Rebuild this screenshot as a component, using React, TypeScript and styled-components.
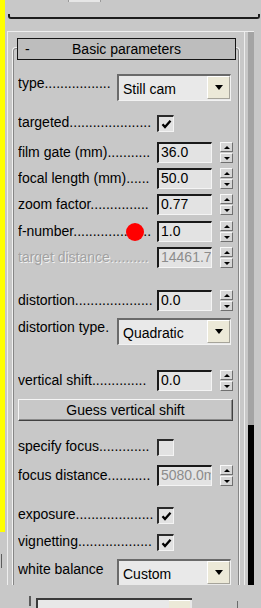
import React from "react";
import styled, { createGlobalStyle } from "styled-components";

const dots = (n: number) => ".".repeat(n);

function Check() {
  return (
    <svg width="13" height="13" viewBox="0 0 13 13">
      <path d="M2.5 6.2 L5 9 L10.5 2.8" fill="none" stroke="#000" strokeWidth="2.3" />
    </svg>
  );
}

function Spinner() {
  return (
    <SpinBox>
      <SpinHalf>
        <ArrowUp />
      </SpinHalf>
      <SpinHalf>
        <ArrowDown />
      </SpinHalf>
    </SpinBox>
  );
}

function SpinRow({
  label,
  value,
  mt,
  labelDisabled,
  valueDisabled,
  children,
}: {
  label: string;
  value: string;
  mt: number;
  labelDisabled?: boolean;
  valueDisabled?: boolean;
  children?: React.ReactNode;
}) {
  return (
    <Row $mt={mt} $h={21}>
      <Label $w={139} $mt={2} $disabled={labelDisabled}>
        {label}
      </Label>
      <Field $disabled={valueDisabled}>{value}</Field>
      <Spinner />
      {children}
    </Row>
  );
}

function CheckRow({ label, mt, checked }: { label: string; mt: number; checked: boolean }) {
  return (
    <Row $mt={mt} $h={17}>
      <Label $w={139} $mt={-1}>
        {label}
      </Label>
      <CheckBox>{checked && <Check />}</CheckBox>
    </Row>
  );
}

function DropRow({
  label,
  value,
  mt,
  labelTop,
}: {
  label: string;
  value: string;
  mt: number;
  labelTop: number;
}) {
  return (
    <Row $mt={mt} $h={27}>
      <Label $w={99} $mt={labelTop}>
        {label}
      </Label>
      <Dropdown>
        <DropText>{value}</DropText>
        <DropButton>
          <ArrowDropDown />
        </DropButton>
      </Dropdown>
    </Row>
  );
}

export default function App() {
  return (
    <>
      <GlobalStyle />
      <Screen>
        <Upper>
          <Edge>
            <Yellow />
            <EdgeTick />
          </Edge>
          <UpperMain>
            <TopBar>
              <Stub />
              <Separator />
            </TopBar>
            <Frame>
              <Panel>
                <Header>
                  <Minus>-</Minus>
                  <HeaderTitle>Basic parameters</HeaderTitle>
                  <span />
                </Header>
                <Group>
                  <DropRow label={"type" + dots(17)} value="Still cam" mt={25} labelTop={1} />
                  <CheckRow label={"targeted" + dots(21)} mt={14} checked />
                  <SpinRow label={"film gate (mm)" + dots(11)} value="36.0" mt={10} />
                  <SpinRow label={"focal length (mm)" + dots(6)} value="50.0" mt={5} />
                  <SpinRow label={"zoom factor" + dots(15)} value="0.77" mt={5} />
                  <SpinRow label={"f-number" + dots(20)} value="1.0" mt={6}>
                    <RedDot />
                  </SpinRow>
                  <SpinRow
                    label={"target distance" + dots(10)}
                    value="14461.74"
                    mt={5}
                    labelDisabled
                    valueDisabled
                  />
                  <SpinRow label={"distortion" + dots(20)} value="0.0" mt={22} />
                  <DropRow label="distortion type." value="Quadratic" mt={7} labelTop={1} />
                  <SpinRow label={"vertical shift" + dots(14)} value="0.0" mt={25} />
                  <Row $mt={8} $h={22}>
                    <GuessButton type="button">Guess vertical shift</GuessButton>
                  </Row>
                  <CheckRow label={"specify focus" + dots(13)} mt={18} checked={false} />
                  <SpinRow
                    label={"focus distance" + dots(11)}
                    value="5080.0mm"
                    mt={9}
                    valueDisabled
                  />
                  <CheckRow label={"exposure" + dots(20)} mt={21} checked />
                  <CheckRow label={"vignetting" + dots(19)} mt={10} checked />
                  <DropRow label="white balance" value="Custom" mt={8} labelTop={2} />
                </Group>
              </Panel>
              <Track>
                <Thumb />
              </Track>
            </Frame>
          </UpperMain>
        </Upper>
        <Bottom>
          <BottomLine />
          <BottomRow>
            <BottomVLine />
            <BottomCombo>
              <BottomComboButton />
            </BottomCombo>
            <BottomTick />
          </BottomRow>
        </Bottom>
      </Screen>
    </>
  );
}

/* styles */

const GlobalStyle = createGlobalStyle`
  html, body {
    margin: 0;
    padding: 0;
    background: #c8c8c8;
  }
  body {
    font-family: "Liberation Sans", Arial, sans-serif;
  }
`;

const Screen = styled.div`
  width: 261px;
  height: 608px;
  display: flex;
  flex-direction: column;
  overflow: hidden;
  background: #c8c8c8;
  color: #000;
  font-family: "Liberation Sans", Arial, sans-serif;
  font-size: 14px;
  line-height: 16px;
`;

const Upper = styled.div`
  display: flex;
  height: 590px;
  flex-shrink: 0;
`;

const Edge = styled.div`
  width: 5px;
  display: flex;
  flex-direction: column;
  flex-shrink: 0;
`;

const Yellow = styled.div`
  height: 532px;
  background: #ffff00;
`;

const EdgeTick = styled.div`
  margin: 22px 0 0 1px;
  width: 1px;
  height: 14px;
  background: #5c5c5c;
`;

const UpperMain = styled.div`
  flex: 1;
  min-width: 0;
  display: flex;
  flex-direction: column;
`;

const TopBar = styled.div`
  height: 31px;
  display: flex;
  flex-direction: column;
  flex-shrink: 0;
`;

const Stub = styled.div`
  margin-left: 63px;
  width: 33px;
  height: 2px;
  box-sizing: border-box;
  background: #e6e6e6;
  border-left: 1px solid #9a9a9a;
  border-right: 1px solid #9a9a9a;
`;

const Separator = styled.div`
  margin: 12px 0 0 3px;
  width: 252px;
  height: 5px;
  box-sizing: border-box;
  border: 2px solid #1c1c1c;
  border-top: none;
  border-radius: 0 0 3px 3px;
`;

const Frame = styled.div`
  display: flex;
  margin-left: 2px;
  width: 247px;
  height: 554px;
  box-sizing: border-box;
  border-top: 1px solid #eeeeee;
  overflow: hidden;
`;

const Panel = styled.div`
  width: 238px;
  flex-shrink: 0;
  box-sizing: border-box;
  border-left: 1px solid #eeeeee;
  border-right: 1px solid #eeeeee;
  display: flex;
  flex-direction: column;
`;

const Header = styled.div`
  position: relative;
  z-index: 1;
  margin: 6px 0 0 9px;
  width: 219px;
  height: 22px;
  flex-shrink: 0;
  box-sizing: border-box;
  border: 1px solid #141414;
  background: #bdbdbd;
  display: grid;
  grid-template-columns: 20px 1fr 20px;
  align-items: center;
`;

const Minus = styled.span`
  padding-left: 7px;
`;

const HeaderTitle = styled.span`
  text-align: center;
`;

const Group = styled.div`
  margin: -12px 0 0 5px;
  width: 226px;
  flex-shrink: 0;
  box-sizing: border-box;
  border: 1px solid #868686;
  border-radius: 3px 3px 0 0;
  box-shadow: 0 0 0 1px #f2f2f2;
  padding: 0 0 40px 4px;
  display: flex;
  flex-direction: column;
`;

const Row = styled.div<{ $mt: number; $h: number }>`
  position: relative;
  display: flex;
  align-items: flex-start;
  margin-top: ${(p) => p.$mt}px;
  height: ${(p) => p.$h}px;
  flex-shrink: 0;
`;

const Label = styled.span<{ $w: number; $mt: number; $disabled?: boolean }>`
  width: ${(p) => p.$w}px;
  margin-top: ${(p) => p.$mt}px;
  flex-shrink: 0;
  white-space: nowrap;
  overflow: hidden;
  color: ${(p) => (p.$disabled ? "#a2a2a2" : "#000")};
  text-shadow: ${(p) => (p.$disabled ? "1px 1px 0 #f2f2f2" : "none")};
`;

const Field = styled.div<{ $disabled?: boolean }>`
  width: 55px;
  height: 21px;
  flex-shrink: 0;
  box-sizing: border-box;
  border-style: solid;
  border-width: 2px 1px 1px 2px;
  border-color: #1a1a1a #f4f4f4 #f4f4f4 #1a1a1a;
  background: #e3e3e3;
  padding-left: 2px;
  white-space: nowrap;
  overflow: hidden;
  color: ${(p) => (p.$disabled ? "#8c8c8c" : "#000")};
`;

const SpinBox = styled.div`
  margin-left: 8px;
  width: 13px;
  height: 21px;
  display: flex;
  flex-direction: column;
  gap: 1px;
  flex-shrink: 0;
`;

const SpinHalf = styled.div`
  flex: 1;
  display: flex;
  align-items: center;
  justify-content: center;
  box-sizing: border-box;
  background: #d6d6d6;
  border: 1px solid;
  border-color: #f8f8f8 #707070 #707070 #f8f8f8;
`;

const ArrowUp = styled.span`
  width: 0;
  height: 0;
  border-left: 3px solid transparent;
  border-right: 3px solid transparent;
  border-bottom: 3px solid #000;
`;

const ArrowDown = styled.span`
  width: 0;
  height: 0;
  border-left: 3px solid transparent;
  border-right: 3px solid transparent;
  border-top: 3px solid #000;
`;

const CheckBox = styled.div`
  width: 17px;
  height: 17px;
  flex-shrink: 0;
  box-sizing: border-box;
  border-style: solid;
  border-width: 2px 1px 1px 2px;
  border-color: #2a2a2a #f4f4f4 #f4f4f4 #2a2a2a;
  background: #e2e2e2;
  display: flex;
  align-items: center;
  justify-content: center;
`;

const Dropdown = styled.div`
  width: 114px;
  height: 27px;
  flex-shrink: 0;
  box-sizing: border-box;
  border-style: solid;
  border-width: 2px 1px 1px 2px;
  border-color: #6a6a6a #f2f2f2 #f2f2f2 #6a6a6a;
  background: #e9e9e9;
  display: flex;
`;

const DropText = styled.span`
  padding: 5px 0 0 4px;
  flex: 1;
  white-space: nowrap;
`;

const DropButton = styled.div`
  width: 23px;
  margin: 0 0 1px 0;
  box-sizing: border-box;
  background: #ece9d8;
  border: 1px solid;
  border-color: #ffffff #a6a49a #a6a49a #ffffff;
  display: flex;
  align-items: center;
  justify-content: center;
`;

const ArrowDropDown = styled.span`
  width: 0;
  height: 0;
  border-left: 4px solid transparent;
  border-right: 4px solid transparent;
  border-top: 5px solid #000;
`;

const GuessButton = styled.button`
  width: 215px;
  height: 22px;
  box-sizing: border-box;
  margin: 0;
  padding: 0;
  border: 1px solid;
  border-color: #f6f6f6 #404040 #404040 #f6f6f6;
  box-shadow: inset -1px -1px 0 #8a8a8a;
  background: #c8c8c8;
  color: #000;
  font-family: inherit;
  font-size: 14px;
  line-height: 18px;
  text-align: center;
`;

const RedDot = styled.span`
  position: absolute;
  left: 108px;
  top: 2px;
  width: 18px;
  height: 18px;
  border-radius: 50%;
  background: #ff0000;
`;

const Track = styled.div`
  margin-left: 3px;
  width: 6px;
  background: #a4a4a4;
  display: flex;
  flex-direction: column;
`;

const Thumb = styled.div`
  margin-top: auto;
  height: 160px;
  background: #000;
`;

const Bottom = styled.div`
  height: 18px;
  display: flex;
  flex-direction: column;
  flex-shrink: 0;
`;

const BottomLine = styled.div`
  margin-top: 1px;
  width: 248px;
  height: 2px;
  background: #2c2c2c;
  box-shadow: 0 1px 0 #eeeeee;
`;

const BottomRow = styled.div`
  flex: 1;
  display: flex;
  align-items: flex-start;
`;

const BottomVLine = styled.div`
  margin: 5px 0 0 29px;
  width: 2px;
  height: 10px;
  background: #5a5a5a;
`;

const BottomCombo = styled.div`
  margin: 7px 0 0 5px;
  width: 156px;
  height: 10px;
  box-sizing: border-box;
  border-top: 2px solid #3a3a3a;
  border-left: 2px solid #3a3a3a;
  background: #e8e8e8;
  display: flex;
  justify-content: flex-end;
`;

const BottomComboButton = styled.div`
  width: 21px;
  margin: 0 2px 0 0;
  background: #ece9d8;
  border-top: 1px solid #ffffff;
`;

const BottomTick = styled.div`
  margin: 10px 0 0 45px;
  width: 1px;
  height: 8px;
  background: #6a6a6a;
`;
